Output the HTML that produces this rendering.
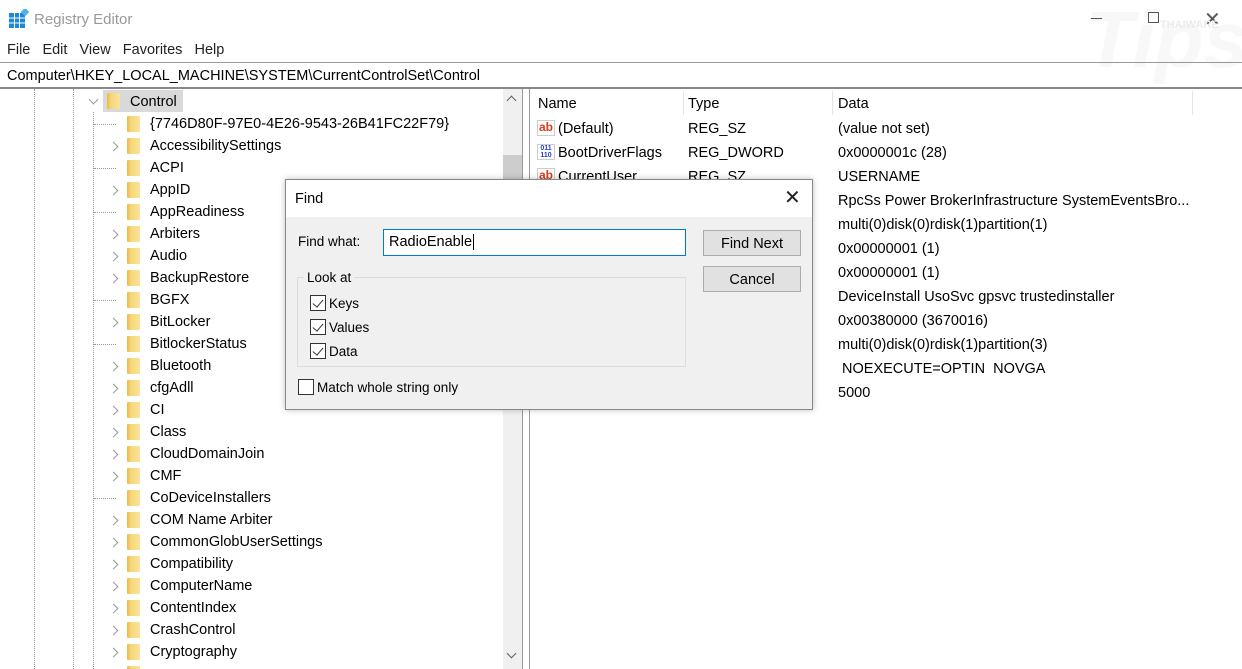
<!DOCTYPE html>
<html style="overflow:hidden;width:1242px;height:669px"><head><meta charset="utf-8"><style>
*{margin:0;padding:0;box-sizing:border-box}
body{width:1242px;height:669px;position:relative;background:#fff;font-family:"Liberation Sans",sans-serif;font-size:14.5px;color:#000;overflow:hidden}
.a{position:absolute;white-space:nowrap}
.fold{position:absolute;width:13px;height:16px;background:linear-gradient(90deg,#e8b94a 0,#f6d67a 30%,#fbe39a 100%);border-radius:1px}
.chev{position:absolute;width:7px;height:7px;border-right:1.5px solid #999;border-bottom:1.5px solid #999;transform:rotate(-45deg)}
.row{position:absolute;left:150px;height:22px;line-height:24px}
.dl{position:absolute;width:0;border-left:1px dotted #999}
.cb{position:absolute;width:16px;height:16px;border:1px solid #333;background:#fff}
.cb.c::after{content:"";position:absolute;left:4px;top:1px;width:5px;height:9px;border-right:1.5px solid #333;border-bottom:1.5px solid #333;transform:rotate(40deg)}
.btn{position:absolute;width:98px;height:26px;background:#e1e1e1;border:1px solid #adadad;text-align:center;line-height:26px}
</style></head><body>
<div class="a" style="left:1085px;top:-6px;font-size:80px;color:#f8f8f8;font-style:italic;font-weight:bold">Tips</div>
<svg class="a" style="left:9px;top:9px" width="20" height="20"><rect x="0" y="4" width="16" height="15" fill="#1e88d8"/><g stroke="#fff" stroke-width="1"><line x1="0" y1="9" x2="16" y2="9"/><line x1="0" y1="14" x2="16" y2="14"/><line x1="5.5" y1="4" x2="5.5" y2="19"/><line x1="10.5" y1="4" x2="10.5" y2="19"/></g><rect x="13" y="0" width="6" height="6" fill="#4fb0ea" transform="rotate(45 16 3)"/></svg>
<div class="a" style="left:34px;top:11px;color:#999;font-size:15px">Registry Editor</div>
<div class="a" style="left:1091px;top:18px;width:11px;border-top:1px solid #555"></div>
<div class="a" style="left:1148px;top:12px;width:11px;height:11px;border:1px solid #555"></div>
<div class="a" style="left:1204px;top:7px;font-size:20px;color:#555">✕</div>
<div class="a" style="left:1160px;top:19px;font-size:11px;color:#ececec;font-weight:bold">THAIWARE</div>
<div class="a" style="left:7px;top:42px;font-size:14.5px;color:#222">File&nbsp;&nbsp; Edit&nbsp;&nbsp; View&nbsp;&nbsp; Favorites&nbsp;&nbsp; Help</div>
<div class="a" style="left:0;top:62px;width:1242px;height:27px;border-top:1px solid #999;border-bottom:2px solid #888"></div>
<div class="a" style="left:7px;top:68px;font-size:14.5px">Computer\HKEY_LOCAL_MACHINE\SYSTEM\CurrentControlSet\Control</div>
<div class="a" style="left:0;top:89px;width:523px;height:580px;border-right:1px solid #999"></div>
<div class="dl" style="left:34px;top:89px;height:580px"></div>
<div class="dl" style="left:73px;top:89px;height:580px"></div>
<div class="dl" style="left:93px;top:112px;height:557px"></div>
<div class="a" style="left:503px;top:89px;width:19px;height:580px;background:#f0f0f0"></div>
<div class="a" style="left:503px;top:155px;width:19px;height:45px;background:#cdcdcd"></div>
<div class="a" style="left:508px;top:97px;width:7px;height:7px;border-left:1.5px solid #606060;border-top:1.5px solid #606060;transform:rotate(45deg)"></div>
<div class="a" style="left:508px;top:650px;width:7px;height:7px;border-right:1.5px solid #606060;border-bottom:1.5px solid #606060;transform:rotate(45deg)"></div>
<div class="a" style="left:103px;top:90px;width:80px;height:22px;background:#d9d9d9"></div>
<div class="chev" style="left:90px;top:96px;transform:rotate(45deg)"></div>
<div class="fold" style="left:107px;top:93px"></div>
<div class="row" style="left:130px;top:90px">Control</div>
<div id="tree"></div>
<script>
var items=[["{7746D80F-97E0-4E26-9543-26B41FC22F79}",0],["AccessibilitySettings",1],["ACPI",0],["AppID",1],["AppReadiness",0],["Arbiters",1],["Audio",1],["BackupRestore",1],["BGFX",0],["BitLocker",1],["BitlockerStatus",0],["Bluetooth",1],["cfgAdll",1],["CI",1],["Class",1],["CloudDomainJoin",1],["CMF",1],["CoDeviceInstallers",0],["COM Name Arbiter",1],["CommonGlobUserSettings",1],["Compatibility",1],["ComputerName",1],["ContentIndex",1],["CrashControl",1],["Cryptography",1],["",1]];
var h="";items.forEach(function(it,i){var t=112+i*22;
if(it[1])h+='<div class="chev" style="left:110px;top:'+(t+9)+'px"></div>';else h+='<div class="a" style="left:94px;top:'+(t+12)+'px;width:22px;border-top:1px dotted #999"></div>';
h+='<div class="fold" style="left:127px;top:'+(t+4)+'px"></div><div class="row" style="top:'+t+'px">'+it[0]+'</div>';});
document.getElementById("tree").innerHTML=h;
</script>
<div class="a" style="left:529px;top:89px;width:1px;height:580px;background:#999"></div>
<div class="a" style="left:683px;top:91px;width:1px;height:24px;background:#e5e5e5"></div>
<div class="a" style="left:832px;top:91px;width:1px;height:24px;background:#e5e5e5"></div>
<div class="a" style="left:1192px;top:91px;width:1px;height:24px;background:#e5e5e5"></div>
<div class="a" style="left:538px;top:96px">Name</div>
<div class="a" style="left:688px;top:96px">Type</div>
<div class="a" style="left:838px;top:96px">Data</div>
<div class="a" style="left:537px;top:120px;width:18px;height:16px;border:1px solid #ccc;background:#fff;color:#d04020;font-size:12px;font-weight:bold;line-height:12px;text-align:center">ab</div>
<div class="a" style="left:537px;top:144px;width:18px;height:16px;border:1px solid #ccc;background:#fff;color:#2040c0;font-size:7px;font-weight:bold;line-height:7px;text-align:center">011<br>110</div>
<div class="a" style="left:537px;top:168px;width:18px;height:16px;border:1px solid #ccc;background:#fff;color:#d04020;font-size:12px;font-weight:bold;line-height:12px;text-align:center">ab</div>
<div class="a" style="left:558px;top:121px">(Default)</div><div class="a" style="left:688px;top:121px">REG_SZ</div><div class="a" style="left:838px;top:121px">(value not set)</div>
<div class="a" style="left:558px;top:145px">BootDriverFlags</div><div class="a" style="left:688px;top:145px">REG_DWORD</div><div class="a" style="left:838px;top:145px">0x0000001c (28)</div>
<div class="a" style="left:558px;top:169px">CurrentUser</div><div class="a" style="left:688px;top:169px">REG_SZ</div><div class="a" style="left:838px;top:169px">USERNAME</div>
<div class="a" style="left:838px;top:193px">RpcSs Power BrokerInfrastructure SystemEventsBro...</div>
<div class="a" style="left:838px;top:217px">multi(0)disk(0)rdisk(1)partition(1)</div>
<div class="a" style="left:838px;top:241px">0x00000001 (1)</div>
<div class="a" style="left:838px;top:265px">0x00000001 (1)</div>
<div class="a" style="left:838px;top:289px">DeviceInstall UsoSvc gpsvc trustedinstaller</div>
<div class="a" style="left:838px;top:313px">0x00380000 (3670016)</div>
<div class="a" style="left:838px;top:337px">multi(0)disk(0)rdisk(1)partition(3)</div>
<div class="a" style="left:838px;top:361px">&nbsp;NOEXECUTE=OPTIN&nbsp; NOVGA</div>
<div class="a" style="left:838px;top:385px">5000</div>
<div class="a" style="left:285px;top:179px;width:528px;height:231px;background:#f0f0f0;border:1px solid #888;box-shadow:0 0 6px rgba(0,0,0,.25)"></div>
<div class="a" style="left:286px;top:180px;width:526px;height:37px;background:#fff"></div>
<div class="a" style="left:295px;top:191px;font-size:14.5px">Find</div>
<div class="a" style="left:784px;top:185px;font-size:20px;color:#222">✕</div>
<div class="a" style="left:298px;top:234px;font-size:13.5px">Find what:</div>
<div class="a" style="left:383px;top:229px;width:303px;height:27px;background:#fff;border:1px solid #0078d7"></div>
<div class="a" style="left:389px;top:234px;font-size:14.5px">RadioEnable<span style="border-left:1px solid #000;margin-left:1px"></span></div>
<div class="btn" style="left:703px;top:230px">Find Next</div>
<div class="btn" style="left:703px;top:266px">Cancel</div>
<div class="a" style="left:297px;top:277px;width:389px;height:90px;border:1px solid #dcdcdc"></div>
<div class="a" style="left:304px;top:270px;background:#f0f0f0;padding:0 3px;font-size:13.5px">Look at</div>
<div class="cb c" style="left:310px;top:295px"></div><div class="a" style="left:329px;top:296px;font-size:13.5px">Keys</div>
<div class="cb c" style="left:310px;top:319px"></div><div class="a" style="left:329px;top:320px;font-size:13.5px">Values</div>
<div class="cb c" style="left:310px;top:343px"></div><div class="a" style="left:329px;top:344px;font-size:13.5px">Data</div>
<div class="cb" style="left:298px;top:379px"></div><div class="a" style="left:317px;top:380px;font-size:13.5px">Match whole string only</div>
</body></html>
